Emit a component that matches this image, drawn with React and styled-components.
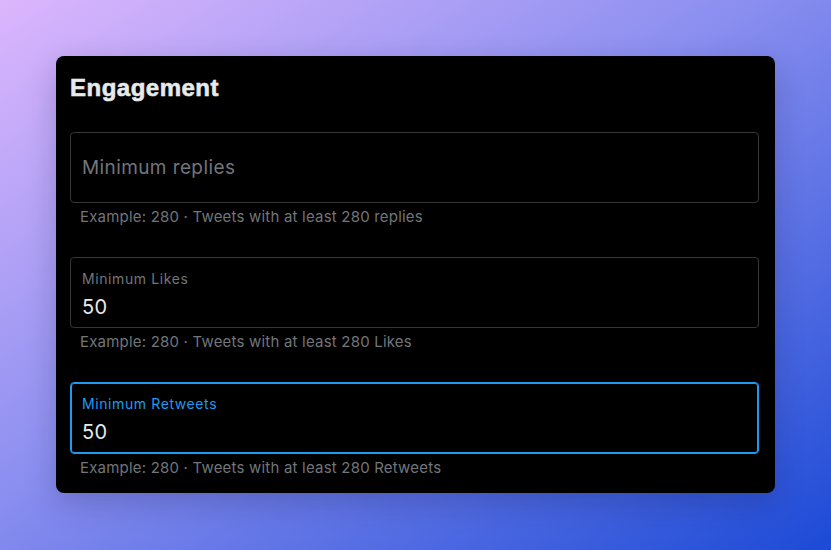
import React from 'react'
import styled, { createGlobalStyle } from 'styled-components'

const GlobalStyle = createGlobalStyle`
    * { box-sizing: border-box; }
    html, body { margin: 0; padding: 0; }
    body {
        font-family: Inter, "Noto Sans", sans-serif;
        -webkit-font-smoothing: antialiased;
    }
`

const Page = styled.div`
    width: 831px;
    height: 550px;
    padding: 56px 56px 0 56px;
    background: linear-gradient(to bottom right, #dcb6fd 0%, #8b8ff0 45%, #1c4ad6 100%);
`

const Card = styled.section`
    width: 719px;
    background-color: #000;
    border-radius: 8px;
    padding: 16px 16px 15px 14px;
    box-shadow: 0 10px 30px rgba(20, 20, 60, .22);
`

const Title = styled.h2`
    margin: 0 0 28px 0;
    font-family: "Liberation Sans", Arial, sans-serif;
    font-weight: 700;
    font-size: 24px;
    line-height: 32px;
    letter-spacing: 0.5px;
    -webkit-text-stroke: 0.6px #e7e9ea;
    color: #e7e9ea;
`

const Fields = styled.div`
    display: flex;
    flex-direction: column;
    gap: 30px;
`

const Field = styled.div`
    display: flex;
    flex-direction: column;
`

const Box = styled.div`
    height: ${props => props.focused ? '72px' : '71px'};
    border: 1px solid ${props => props.focused ? '#1d9bf0' : '#333639'};
    box-shadow: ${props => props.focused ? 'inset 0 0 0 1px #1d9bf0' : 'none'};
    border-radius: 4px;
    padding: ${props => props.empty ? '0 11px' : '11px 11px 0 11px'};
    display: flex;
    flex-direction: column;
    justify-content: ${props => props.empty ? 'center' : 'flex-start'};
`

const Label = styled.div`
    font-size: 14px;
    line-height: 20px;
    letter-spacing: 0.6px;
    color: ${props => props.focused ? '#1d9bf0' : '#71767b'};
`

const Value = styled.div`
    margin-top: 6px;
    font-size: 20px;
    line-height: 24px;
    letter-spacing: 0.4px;
    color: #e7e9ea;
`

const Placeholder = styled.div`
    font-size: 19px;
    line-height: 24px;
    letter-spacing: 0.4px;
    color: #71767b;
`

const Helper = styled.p`
    margin: 4px 0 0 10px;
    font-size: 15px;
    line-height: 20px;
    letter-spacing: 0.2px;
    color: #71767b;
`

const fields = [
    { label: 'Minimum replies', value: '', helper: 'Example: 280 · Tweets with at least 280 replies' },
    { label: 'Minimum Likes', value: '50', helper: 'Example: 280 · Tweets with at least 280 Likes' },
    { label: 'Minimum Retweets', value: '50', helper: 'Example: 280 · Tweets with at least 280 Retweets', focused: true },
]

const App = () => {
    return (
        <>
            <GlobalStyle />
            <Page>
                <Card>
                    <Title>Engagement</Title>
                    <Fields>
                        {fields.map(f => (
                            <Field key={f.label}>
                                <Box focused={f.focused} empty={!f.value}>
                                    {f.value ? (
                                        <>
                                            <Label focused={f.focused}>{f.label}</Label>
                                            <Value>{f.value}</Value>
                                        </>
                                    ) : (
                                        <Placeholder>{f.label}</Placeholder>
                                    )}
                                </Box>
                                <Helper>{f.helper}</Helper>
                            </Field>
                        ))}
                    </Fields>
                </Card>
            </Page>
        </>
    )
}

export default App
